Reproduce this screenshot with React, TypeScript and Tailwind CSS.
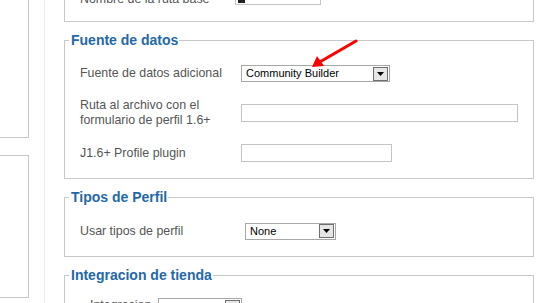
import React from "react";

const FONT = { fontFamily: '"Liberation Sans", Arial, sans-serif' };

function Select({ text, width }: { text: string; width: number }) {
  return (
    <div
      className="flex h-[17px] items-center border border-[#a7a7a7] bg-white pl-[4px] pr-[1px] text-[11px] text-black"
      style={{ width }}
    >
      <span className="flex-1 leading-none">{text}</span>
      <span className="flex h-[14px] w-[15px] items-center justify-center border border-[#6f6f6f] bg-[#e6e6e6]">
        <svg width="7" height="4" viewBox="0 0 7 4">
          <path d="M0 0h7L3.5 4z" fill="#000" />
        </svg>
      </span>
    </div>
  );
}

function Input({ width }: { width: number }) {
  return <div className="h-[18px] border border-[#c4c4c4] bg-white" style={{ width }} />;
}

function Legend({ children }: { children: React.ReactNode }) {
  return (
    <legend className="ml-[4px] pl-[2px] pr-[1px] text-[14px] font-bold leading-[18px] text-[#2468a8]">
      {children}
    </legend>
  );
}

export default function App() {
  return (
    <div className="flex h-[303px] w-[546px] overflow-hidden bg-white" style={FONT}>
      {/* left column */}
      <div className="flex w-[29px] shrink-0 flex-col">
        <div className="h-[138px] border-b border-r border-[#c8c8c8]" />
        <div className="mt-[17px] h-[143px] border border-l-0 border-[#c8c8c8]" />
      </div>

      {/* main column */}
      <div className="ml-[15px] flex w-[490px] shrink-0 flex-col border-l border-[#ececec] pl-[19px]">
        {/* partially visible top box */}
        <div className="-mt-[15px] w-[470px] border-x border-b border-[#c8c8c8] pb-[16px]">
          <div className="flex h-[20px] items-end pl-[15px] text-[12.4px] text-[#555]">
            <span className="w-[155px] translate-y-[2px] leading-[15px]">Nombre de la ruta base</span>
            <div className="flex h-[20px] w-[86px] items-end border border-[#c4c4c4] pl-[2px]">
              <div className="mb-[1px] h-[3px] w-[7px] bg-[#222]" />
            </div>
          </div>
        </div>

        {/* Fuente de datos */}
        <fieldset className="relative mt-[9px] w-[470px] border border-[#c8c8c8] px-0 pb-[16px] pt-[16px]">
          <Legend>Fuente de datos</Legend>
          <div className="flex flex-col gap-[16px] pl-[15px] text-[12.4px] text-[#555]">
            <div className="flex h-[17px] items-center">
              <span className="w-[161px]">Fuente de datos adicional</span>
              <Select text="Community Builder" width={149} />
            </div>
            <div className="flex h-[30px] items-center">
              <span className="w-[161px] leading-[15px]">
                Ruta al archivo con el
                <br />
                formulario de perfil 1.6+
              </span>
              <Input width={277} />
            </div>
            <div className="flex h-[18px] items-center">
              <span className="w-[161px]">J1.6+ Profile plugin</span>
              <Input width={151} />
            </div>
          </div>
          {/* red arrow annotation */}
          <svg
            className="absolute left-[243px] top-[-10px]"
            width="50"
            height="32"
            viewBox="0 0 50 32"
          >
            <path d="M48 2 L10 24" stroke="#ff0000" strokeWidth="3" strokeLinecap="round" />
            <path d="M4 28 L9 17 L16 27 Z" fill="#ff0000" />
          </svg>
        </fieldset>

        {/* Tipos de Perfil */}
        <fieldset className="mt-[9px] w-[470px] border border-[#c8c8c8] px-0 pb-[16px] pt-[16px]">
          <Legend>Tipos de Perfil</Legend>
          <div className="flex h-[18px] items-center pl-[15px] text-[12.4px] text-[#555]">
            <span className="w-[165px]">Usar tipos de perfil</span>
            <Select text="None" width={91} />
          </div>
        </fieldset>

        {/* Integracion de tienda */}
        <fieldset className="mt-[9px] w-[470px] border border-[#c8c8c8] px-0 pb-[16px] pt-[14px]">
          <Legend>Integracion de tienda</Legend>
          <div className="flex h-[30px] items-start pl-[25px] text-[12.4px] text-[#555]">
            <span className="w-[68px] leading-[15px]">Integracion</span>
            <Select text="" width={84} />
          </div>
        </fieldset>
      </div>
    </div>
  );
}
